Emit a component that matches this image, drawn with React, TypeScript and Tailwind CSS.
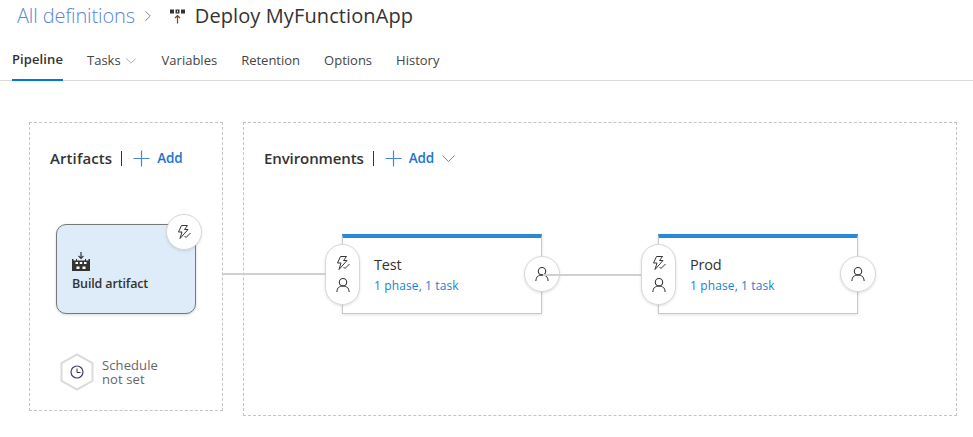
import React from "react";
import { ChevronRight } from "lucide-react";

const font = "font-['Open_Sans','Noto_Sans',sans-serif]";

function BoltCheck() {
  return (
    <svg width="16" height="16" viewBox="0 0 16 16" fill="none" stroke="#333" strokeWidth="1">
      <path d="M5.5 1.5h6L8.5 5.5h3.5L4 14.5l2-6.5H2.5z" />
      <path d="M8.5 12l1.5 1.5 4.5-4.5" />
    </svg>
  );
}

function Person() {
  return (
    <svg width="16" height="16" viewBox="0 0 16 16" fill="none" stroke="#333" strokeWidth="1.1">
      <circle cx="8" cy="5.2" r="3.7" />
      <path d="M1.8 15c0-3.6 2.6-6 6.200-6s6.200 2.400 6.200 6" />
    </svg>
  );
}

function PipelineIcon() {
  return (
    <svg width="15" height="15" viewBox="0 0 15 15">
      <rect x="0" y="0.500" width="4" height="4" fill="#333" />
      <rect x="5.500" y="0.500" width="4" height="4" fill="#333" />
      <rect x="11" y="0.500" width="4" height="4" fill="#333" />
      <rect x="7" y="1.700" width="1" height="1.600" fill="#fff" />
      <path d="M7.500 14.500V6.500M5 9l2.500-2.500L10 9" fill="none" stroke="#6b4a2b" strokeWidth="1.200" />
    </svg>
  );
}

function BuildIcon() {
  return (
    <svg width="18" height="20" viewBox="0 0 18 20">
      <path d="M9 0v6M6.500 3.800L9 6.300l2.500-2.500" fill="none" stroke="#333" strokeWidth="1.200" />
      <path d="M0 19V7h1.500v1.500H4V7h1v1.500h8V7h1v1.500h2.500V7H18v12z" fill="#333" />
      <rect x="3.500" y="10" width="2.500" height="2" fill="#fff" />
      <rect x="7.750" y="10" width="2.500" height="2" fill="#fff" />
      <rect x="12" y="10" width="2.500" height="2" fill="#fff" />
      <rect x="4.500" y="14.500" width="3" height="2.500" fill="#fff" />
      <rect x="10.500" y="14.500" width="3" height="2.500" fill="#fff" />
    </svg>
  );
}

function ScheduleIcon() {
  return (
    <svg width="38" height="38" viewBox="0 0 38 38" fill="none">
      <path d="M19 1.500L34.500 10v18L19 36.500 3.500 28V10z" fill="#fff" stroke="#dcdcdc" strokeWidth="2" />
      <circle cx="19" cy="19" r="6" stroke="#4b3b78" strokeWidth="1.200" />
      <path d="M19 15.500V19.500h3.500" stroke="#333" strokeWidth="1" />
    </svg>
  );
}

function PlusIcon() {
  return (
    <svg width="17" height="17" viewBox="0 0 17 17" fill="none" stroke="#4a86d8" strokeWidth="1.200">
      <path d="M8.500 0.500v16M0.500 8.500h16" />
    </svg>
  );
}

function Chevron({ width, color }: { width: number; color: string }) {
  return (
    <svg width={width} height={width / 2 + 1} viewBox="0 0 14 8" fill="none" stroke={color} strokeWidth="1">
      <path d="M0.500 0.500L7 7l6.500-6.500" />
    </svg>
  );
}

function AddButton({ chevron }: { chevron?: boolean }) {
  return (
    <div className="flex items-center text-[#1b74d0]">
      <span className="ml-[9px] h-[15px] w-px bg-[#333]" />
      <span className="ml-[11px]"><PlusIcon /></span>
      <span className="ml-[7px] text-[13.5px] font-semibold tracking-[-0.2px]">Add</span>
      {chevron && <span className="ml-[8px] flex"><Chevron width={13} color="#4a86d8" /></span>}
    </div>
  );
}

function EnvCard({ name, connector }: { name: string; connector?: string }) {
  return (
    <div className="relative h-[80px] w-[200px] border-x border-b border-[#c8c8c8] border-t-4 border-t-[#2b88d8] bg-white pl-[31px] pt-[17px] shadow-[0_1px_3px_rgba(0,0,0,0.12)]">
      {connector && <span className={`absolute top-[35px] h-0.5 bg-[#d0d0d0] ${connector}`} />}
      <div className="absolute left-[-18px] top-[6px] flex h-[61px] w-[35px] flex-col items-center justify-center gap-[6px] rounded-full border border-[#d8d8d8] bg-white shadow-[0_1px_3px_rgba(0,0,0,0.12)]">
        <BoltCheck />
        <Person />
      </div>
      <div className="absolute right-[-19px] top-[18px] flex size-[36px] items-center justify-center rounded-full border border-[#d8d8d8] bg-white shadow-[0_1px_3px_rgba(0,0,0,0.12)]">
        <Person />
      </div>
      <div className="text-[14.5px] leading-[20px] tracking-[-0.2px] text-[#333]">{name}</div>
      <div className="mt-[3px] text-[12px] leading-[16px] tracking-[0.12px] text-[#1a7fcf]">1 phase, 1 task</div>
    </div>
  );
}

export default function App() {
  const tabs = ["Variables", "Retention", "Options", "History"];
  return (
    <div className={`h-[437px] w-[973px] overflow-hidden bg-white ${font}`}>
      <div className="flex h-[33px] items-center pl-[17px] pb-[1px]">
        <span className="text-[20px] font-light tracking-[-0.15px] text-[#5b86d8]">All definitions</span>
        <ChevronRight className="ml-[4px] size-[18px] text-[#777]" strokeWidth={1.2} />
        <span className="ml-[13px]"><PipelineIcon /></span>
        <span className="ml-[10px] text-[20px] tracking-[0.1px] text-[#333]">Deploy MyFunctionApp</span>
      </div>

      <div className="flex h-[48px] items-stretch border-b border-[#dadada] pl-[12px] text-[13px] text-[#444]">
        <div className="mb-[-1px] flex items-center border-b-2 border-[#0078d4] pt-[7px] font-semibold tracking-[0.1px] text-[#333]">Pipeline</div>
        <div className="ml-[24px] flex items-center pt-[8px]">
          Tasks
          <span className="ml-[5px] flex"><Chevron width={10} color="#888" /></span>
        </div>
        {tabs.map((t, i) => (
          <div key={t} className={`flex items-center pt-[8px] ${i === 0 ? "ml-[26px]" : "ml-[24px]"}`}>
            {t}
          </div>
        ))}
      </div>

      <div className="flex items-start gap-[20px] pl-[29px] pt-[41px]">
        <div className="relative h-[289px] w-[194px] border border-dashed border-[#c4c4c4] pl-[20px] pt-[24px]">
          <div className="flex items-center">
            <span className="text-[15px] font-semibold tracking-[0.1px] text-[#333]">Artifacts</span>
            <AddButton />
          </div>
          <div className="relative ml-[6px] mt-[54px] h-[90px] w-[140px] rounded-[10px] border border-[#777] bg-[#deecf9] pl-[15px] pt-[27px] shadow-[0_1px_3px_rgba(0,0,0,0.15)]">
            <BuildIcon />
            <div className="mt-[3px] text-[12.5px] font-semibold tracking-[-0.15px] text-[#333]">Build artifact</div>
            <div className="absolute right-[-7px] top-[-11px] flex size-[36px] items-center justify-center rounded-full border border-[#d8d8d8] bg-white shadow-[0_1px_3px_rgba(0,0,0,0.12)]">
              <BoltCheck />
            </div>
          </div>
          <span className="absolute left-[193px] top-[150px] z-10 h-0.5 w-[103px] bg-[#d0d0d0]" />
          <div className="ml-[8px] mt-[39px] flex items-center">
            <ScheduleIcon />
            <div className="ml-[6px] text-[13px] tracking-[0.1px] text-[#666]">
              <div className="h-[14px] leading-[14px]">Schedule</div>
              <div className="h-[14px] leading-[14px]">not set</div>
            </div>
          </div>
        </div>

        <div className="h-[294px] w-[714px] border border-dashed border-[#c4c4c4] pl-[20px] pt-[24px]">
          <div className="flex items-center">
            <span className="text-[15px] font-semibold tracking-[-0.1px] text-[#333]">Environments</span>
            <AddButton chevron />
          </div>
          <div className="ml-[78px] mt-[64px] flex gap-[116px]">
            <EnvCard name="Test" />
            <EnvCard name="Prod" connector="left-[-116px] top-[36px] w-[100px]" />
          </div>
        </div>
      </div>
    </div>
  );
}
